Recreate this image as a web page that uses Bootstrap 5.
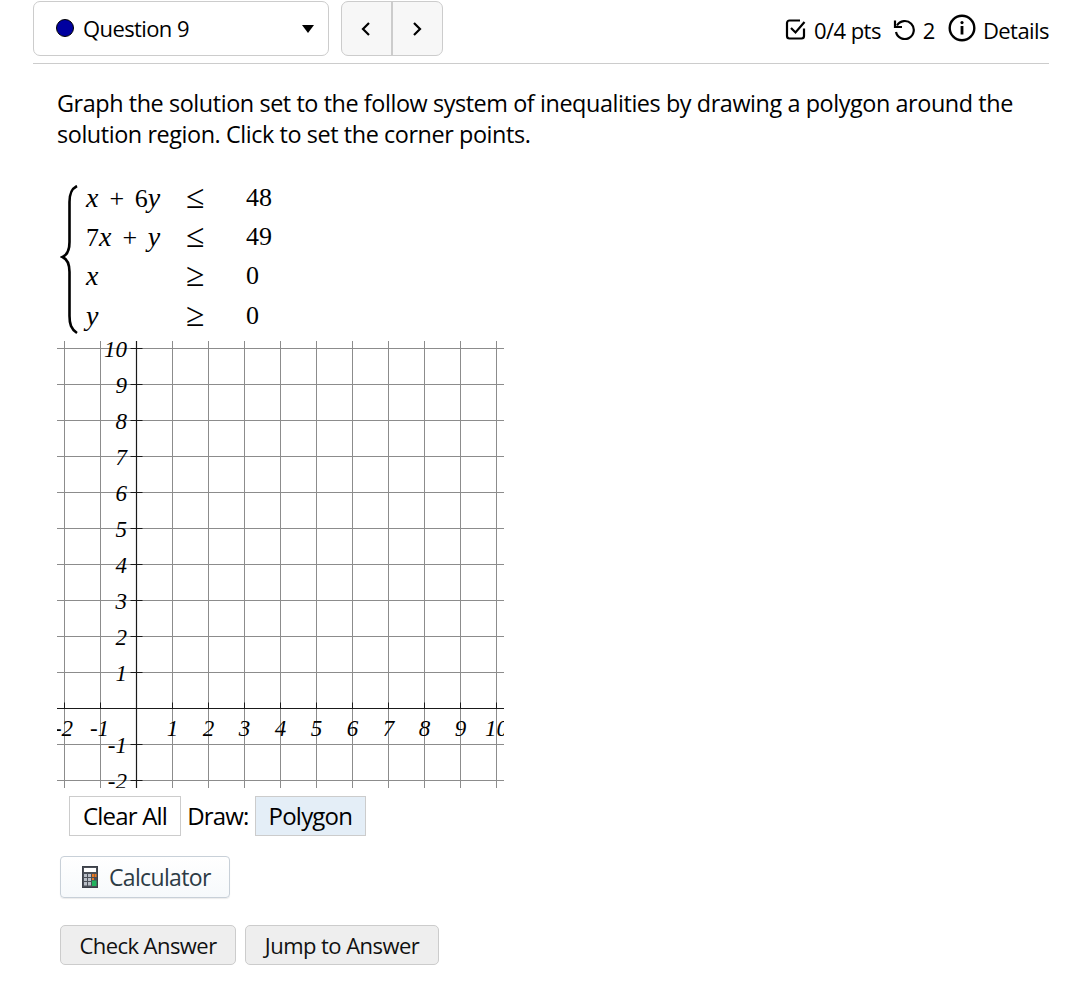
<!DOCTYPE html>
<html lang="en">
<head>
<meta charset="utf-8">
<title>Question 9</title>
<link href="https://cdn.jsdelivr.net/npm/bootstrap@5.3.0/dist/css/bootstrap.min.css" rel="stylesheet">
<style>
body{font-family:"Open Sans",sans-serif;color:#000;background:#fff;font-size:23px;overflow:hidden}
.page-wrap{padding:1px 17px 0 33px}
.q-head{height:63px;border-bottom:1px solid #ccc}
.q-select{width:296px;height:55px;border:1px solid #ccc;border-radius:7px;padding:0 13px 0 22px;font-size:22px;letter-spacing:-.6px}
.q-dot{width:18px;height:18px;border-radius:50%;background:#00009f;border:1.5px solid #000;margin-right:9px;margin-top:-2px}
.q-caret{width:0;height:0;border-left:6.5px solid transparent;border-right:6.5px solid transparent;border-top:8px solid #000;margin-right:1px}
.q-nav{margin-left:12px;width:102px;height:55px;border:1px solid #ccc;border-radius:7px;background:#f7f7f7;overflow:hidden}
.q-nav-btn{width:49px;height:100%;padding-right:1px}
.q-nav-btn+.q-nav-btn{border-left:2px solid #ccc;width:51px;padding-right:2px}
.q-meta{font-size:22px;letter-spacing:-.55px;line-height:1;padding-top:18px}
.q-body{padding:24px 0 0 24px}
.q-text{font-size:23.4px;letter-spacing:-.42px;line-height:31px;margin:0 0 30px}
.mat{display:grid;grid-template-columns:99px 61px auto;grid-auto-rows:39.2px;height:156px;margin-left:29px;font-family:"Liberation Serif",serif;font-size:26px;line-height:36px;position:relative;width:max-content;word-spacing:4px}
.mat i{letter-spacing:.6px;font-size:28px}
.mat-brace{position:absolute;left:-26px;top:5px}
.mat-rel{font-size:33.5px;line-height:34px;margin-left:1px}
.graph-box{display:block;margin-top:5px}
.graph-box text{font-family:"Liberation Serif",serif;font-style:italic;font-size:23px;fill:#000}
.tools{margin:8px 0 0 12px;height:40px;font-size:24px;letter-spacing:-.8px}
.tool-btn{height:40px;border:1px solid #ccc;background:#fff;padding:0 13px;line-height:38px}
.tool-on{background:#e4eef7}
.tool-lbl{margin:0 6px}
.calc-btn{margin:20px 0 0 3px;width:170px;height:42px;border:1px solid #c8d0d8;border-radius:4px;background:linear-gradient(#fff,#f6f9fb);font-size:23px;letter-spacing:-.65px;color:#2d3b45;box-shadow:0 1px 1px rgba(0,0,0,.08)}
.act-row{margin:27px 0 0 3px;gap:9px}
.act-btn{height:40px;border:1px solid #ccc;border-radius:5px;background:#eee;font-size:22px;letter-spacing:-.55px;color:#111}
.pts-ic{margin-right:8px}
.undo-ic{margin:0 8px 0 11px}
.info-ic{margin:-5px 7px 0 13px}
.calc-ic{margin:0 11px 0 21px}
.check-w{width:176px}
.jump-w{width:194px}
</style>
</head>
<body>
<div class="page-wrap">
  <div class="q-head d-flex align-items-start">
    <div class="q-select d-flex align-items-center">
      <span class="q-dot"></span><span>Question 9</span>
      <span class="q-caret ms-auto"></span>
    </div>
    <div class="q-nav d-flex">
      <div class="q-nav-btn d-flex align-items-center justify-content-center">
        <svg width="12" height="16" viewBox="0 0 12 16"><path d="M9 2 3 8l6 6" fill="none" stroke="#000" stroke-width="2.2"/></svg>
      </div>
      <div class="q-nav-btn d-flex align-items-center justify-content-center">
        <svg width="12" height="16" viewBox="0 0 12 16"><path d="M3 2l6 6-6 6" fill="none" stroke="#000" stroke-width="2.2"/></svg>
      </div>
    </div>
    <div class="q-meta ms-auto d-flex align-items-start">
      <svg width="21" height="21" viewBox="0 0 21 21" class="pts-ic"><path d="M19 9.500V17a2.500 2.500 0 0 1-2.500 2.500h-12A2.500 2.500 0 0 1 2 17V4a2.500 2.500 0 0 1 2.500-2.500H15" fill="none" stroke="#000" stroke-width="2.200"/><path d="M6 9l4.500 4.500L19.500 3" fill="none" stroke="#000" stroke-width="2.200"/></svg>
      <span>0/4 pts</span>
      <svg width="23" height="21" viewBox="0 0 23 21" class="undo-ic"><path d="M5 6.500A9 9 0 1 1 4 13" fill="none" stroke="#000" stroke-width="2.200"/><path d="M3 1.500v6.500h7" fill="none" stroke="#000" stroke-width="2.200"/></svg>
      <span>2</span>
      <svg width="28" height="28" viewBox="0 0 28 28" class="info-ic"><circle cx="14" cy="14" r="12.300" fill="none" stroke="#000" stroke-width="2.400"/><circle cx="14" cy="8.600" r="1.600"/><rect x="12.600" y="12" width="2.800" height="8.500"/></svg>
      <span>Details</span>
    </div>
  </div>
  <div class="q-body">
    <p class="q-text">Graph the solution set to the follow system of inequalities by drawing a polygon around the solution region. Click to set the corner points.</p>
    <div class="mat">
      <svg class="mat-brace" width="24" height="150" viewBox="0 0 24 150"><path d="M17 1C11 4 9.500 9 9.500 17v40c0 9-2.500 13-7 15 4.500 2 7 6 7 15v44c0 8 1.500 13 7.500 17" fill="none" stroke="#000" stroke-width="2.600"/></svg>
      <div><i>x</i> + 6<i>y</i></div><div class="mat-rel">≤</div><div>48</div>
      <div>7<i>x</i> + <i>y</i></div><div class="mat-rel">≤</div><div>49</div>
      <div><i>x</i></div><div class="mat-rel">≥</div><div>0</div>
      <div><i>y</i></div><div class="mat-rel">≥</div><div>0</div>
    </div>
    <svg id="graph" class="graph-box" width="447" height="447" viewBox="0 0 447 447"></svg>
    <div class="tools d-flex align-items-center">
      <span class="tool-btn">Clear All</span><span class="tool-lbl">Draw:</span><span class="tool-btn tool-on">Polygon</span>
    </div>
    <div class="calc-btn d-flex align-items-center">
      <svg width="16" height="22" viewBox="0 0 16 22" class="calc-ic">
        <rect x=".5" y=".5" width="15" height="21" fill="#4a4f57" stroke="#3c4048"/>
        <rect x="2" y="2" width="12" height="4" fill="#fff"/>
        <g fill="#b9bec6"><rect x="2" y="8" width="3" height="3"/><rect x="6" y="8" width="3" height="3"/><rect x="2" y="12" width="3" height="3"/><rect x="6" y="12" width="3" height="3"/><rect x="2" y="16" width="3" height="3.500"/><rect x="6" y="16" width="3" height="3.500"/></g>
        <g fill="#e87a23"><rect x="10" y="8" width="2" height="3"/><rect x="12.500" y="8" width="2" height="3"/><rect x="10" y="12" width="2" height="2"/></g>
        <rect x="10" y="14.500" width="4.500" height="5.500" fill="#22b35e"/>
      </svg>
      <span>Calculator</span>
    </div>
    <div class="act-row d-flex">
      <div class="act-btn d-flex align-items-center justify-content-center check-w">Check Answer</div>
      <div class="act-btn d-flex align-items-center justify-content-center jump-w">Jump to Answer</div>
    </div>
  </div>
</div>
<script src="https://cdn.jsdelivr.net/npm/bootstrap@5.3.0/dist/js/bootstrap.bundle.min.js"></script>
<script>
(function(){
  var ns='http://www.w3.org/2000/svg',g=document.getElementById('graph');
  function ln(x1,y1,x2,y2,c,w){var l=document.createElementNS(ns,'line');l.setAttribute('x1',x1);l.setAttribute('y1',y1);l.setAttribute('x2',x2);l.setAttribute('y2',y2);l.setAttribute('stroke',c);l.setAttribute('stroke-width',w);g.appendChild(l);}
  function tx(x,y,s,a){var t=document.createElementNS(ns,'text');t.setAttribute('x',x);t.setAttribute('y',y);t.setAttribute('text-anchor',a);t.textContent=s;g.appendChild(t);}
  var X=function(v){return 79.5+36*v},Y=function(v){return 367.5-36*v},v;
  for(v=-2;v<=10;v++){if(v){ln(X(v),0,X(v),447,'#8c8c8c',1);ln(0,Y(v),447,Y(v),'#8c8c8c',1);}}
  ln(0,Y(0),447,Y(0),'#1a1a1a',1.2);ln(X(0),0,X(0),447,'#1a1a1a',1.2);
  for(v=-2;v<=10;v++){if(v){ln(X(v),Y(0)-6,X(v),Y(0),'#1a1a1a',1);ln(X(0)-6,Y(v),X(0)+6,Y(v),'#1a1a1a',1);}}
  for(v=-2;v<=10;v++){if(!v)continue;
    tx(X(v)+(v<0?-1:0),395,String(v),'middle');
    tx(70,Y(v)+8,String(v),'end');
  }
})();
</script>
</body>
</html>
